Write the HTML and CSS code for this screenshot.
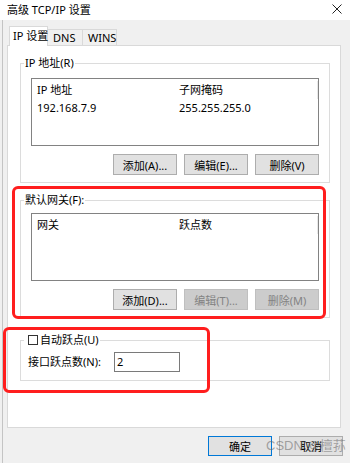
FILE: index.html
```html
<!DOCTYPE html>
<html lang="zh-CN">
<head>
    <meta charset="UTF-8">
    <meta name="viewport" content="width=device-width, initial-scale=1.0">
    <title>高级 TCP/IP 设置</title>
    <link rel="stylesheet" href="styles.css">
</head>
<body>
    <div class="titlebar">
        <span class="title">高级 TCP/IP 设置</span>
        <svg class="close" width="10" height="10" viewBox="0 0 10 10">
            <path d="M0.5 0.5 L9.5 9.5 M9.5 0.5 L0.5 9.5" stroke="#222" stroke-width="1" fill="none"/>
        </svg>
    </div>
    <div class="dialog">
        <div class="tabs">
            <div class="tab active">IP 设置</div>
            <div class="tab tab-dns">DNS</div>
            <div class="tab tab-wins">WINS</div>
        </div>
        <div class="tab-page">
            <fieldset class="group">
                <legend>IP 地址(R)</legend>
                <div class="list">
                    <div class="row head">
                        <span class="col-a">IP 地址</span>
                        <span class="col-b">子网掩码</span>
                    </div>
                    <div class="row">
                        <span class="col-a">192.168.7.9</span>
                        <span class="col-b">255.255.255.0</span>
                    </div>
                </div>
                <div class="buttons">
                    <button class="btn">添加(A)...</button>
                    <button class="btn">编辑(E)...</button>
                    <button class="btn">删除(V)</button>
                </div>
            </fieldset>
            <fieldset class="group gateways">
                <legend>默认网关(F):</legend>
                <div class="list">
                    <div class="row head">
                        <span class="col-a">网关</span>
                        <span class="col-b">跃点数</span>
                    </div>
                </div>
                <div class="buttons">
                    <button class="btn">添加(D)...</button>
                    <button class="btn" disabled>编辑(T)...</button>
                    <button class="btn" disabled>删除(M)</button>
                </div>
            </fieldset>
            <fieldset class="group metric">
                <legend><span class="checkbox"></span>自动跃点(U)</legend>
                <div class="metric-row">
                    <span class="metric-label">接口跃点数(N):</span>
                    <span class="input">2</span>
                </div>
            </fieldset>
        </div>
        <div class="footer">
            <button class="btn default">确定</button>
            <button class="btn">取消</button>
        </div>
    </div>

    <!-- annotations drawn over the screenshot -->
    <div class="mark mark-gateway"></div>
    <div class="mark mark-metric"></div>
    <div class="watermark">CSDN @檀荪</div>
</body>
</html>
```

FILE: styles.css
```css
body {
    margin: 0;
    width: 350px;
    height: 463px;
    overflow: hidden;
    position: relative;
    background: #f0f0f0;
    font-family: "Noto Sans", "Noto Sans CJK SC", sans-serif;
    font-size: 11px;
    line-height: 14px;
    color: #000;
}
.titlebar {
    height: 20px;
    background: #fff;
    display: flex;
    align-items: center;
    justify-content: space-between;
    padding: 0 8px 0 7px;
}
.close {
    margin-top: -3px;
}
.dialog {
    margin-left: 2px;
    border-left: 1px solid #c4c4c4;
    padding-left: 4px;
    height: 443px;
}
.tabs {
    display: flex;
    align-items: flex-end;
    height: 25px;
    padding-left: 2px;
}
.tab {
    height: 15px;
    box-sizing: content-box;
    padding-left: 5px;
    border: 1px solid #d9d9d9;
    border-bottom: none;
    border-left: none;
    background: #f0f0f0;
    line-height: 15px;
    white-space: nowrap;
}
.tab-dns {
    width: 29px;
}
.tab-wins {
    width: 28px;
}
.tab.active {
    width: 34px;
    height: 19px;
    line-height: 18px;
    background: #fff;
    border-left: 1px solid #d9d9d9;
    margin-bottom: -1px;
    position: relative;
    z-index: 1;
    padding-left: 3px;
}
.tab-page {
    width: 334px;
    height: 383px;
    box-sizing: border-box;
    background: #fff;
    border: 1px solid #d9d9d9;
    padding-top: 10px;
}
.group {
    margin: 0 10px 0 12px;
    border: 1px solid #dcdcdc;
    padding: 8px 10px 7px 3px;
    min-width: 0;
}
.group legend {
    padding: 0 1px;
    line-height: 14px;
}
.gateways {
    margin-top: 10px;
    padding-top: 6px;
}
.list {
    margin-left: 7px;
    height: 68px;
    box-sizing: border-box;
    border: 1px solid #828282;
    padding-top: 2px;
}
.row {
    display: flex;
    height: 18px;
    line-height: 18px;
}
.row.head {
    width: 285px;
    border-right: 1px solid #e8e8e8;
}
.col-a {
    width: 142px;
    padding-left: 5px;
}
.col-b {
    flex: 1;
}
.buttons {
    display: flex;
    justify-content: flex-end;
    gap: 7px;
    margin-top: 8px;
}
.btn {
    width: 64px;
    height: 21px;
    box-sizing: border-box;
    border: 1px solid #adadad;
    background: #e1e1e1;
    font-family: inherit;
    font-size: 11px;
    color: #000;
    padding: 0;
}
.btn:disabled {
    background: #cccccc;
    border-color: #bfbfbf;
    color: #838383;
}
.btn.default {
    border-color: #0078d7;
}
.metric {
    margin-top: 15px;
    padding: 5px 10px 8px 3px;
}
.checkbox {
    display: inline-block;
    width: 10px;
    height: 10px;
    box-sizing: border-box;
    border: 1px solid #333;
    background: #fff;
    margin: 0 2px 0 3px;
    vertical-align: -1px;
}
.metric-row {
    display: flex;
    align-items: center;
    padding-left: 4px;
}
.metric-label {
    width: 86px;
}
.input {
    width: 66px;
    height: 20px;
    box-sizing: border-box;
    border: 1px solid #7a7a7a;
    background: #fff;
    padding-left: 2px;
    line-height: 18px;
}
.footer {
    display: flex;
    justify-content: flex-end;
    gap: 7px;
    width: 336px;
    margin-top: 8px;
}
.footer .btn {
    height: 20px;
}
.mark {
    position: absolute;
    border: 3px solid #ff1e1e;
    border-radius: 6px;
    box-sizing: border-box;
}
.mark-gateway {
    left: 12px;
    top: 186px;
    width: 314px;
    height: 133px;
}
.mark-metric {
    left: 3px;
    top: 327px;
    width: 207px;
    height: 66px;
}
.watermark {
    position: absolute;
    left: 266px;
    top: 437px;
    white-space: nowrap;
    font-family: "Liberation Sans", "Noto Sans CJK SC", sans-serif;
    font-size: 13px;
    line-height: 18px;
    color: rgba(100, 100, 100, 0.55);
}
```
